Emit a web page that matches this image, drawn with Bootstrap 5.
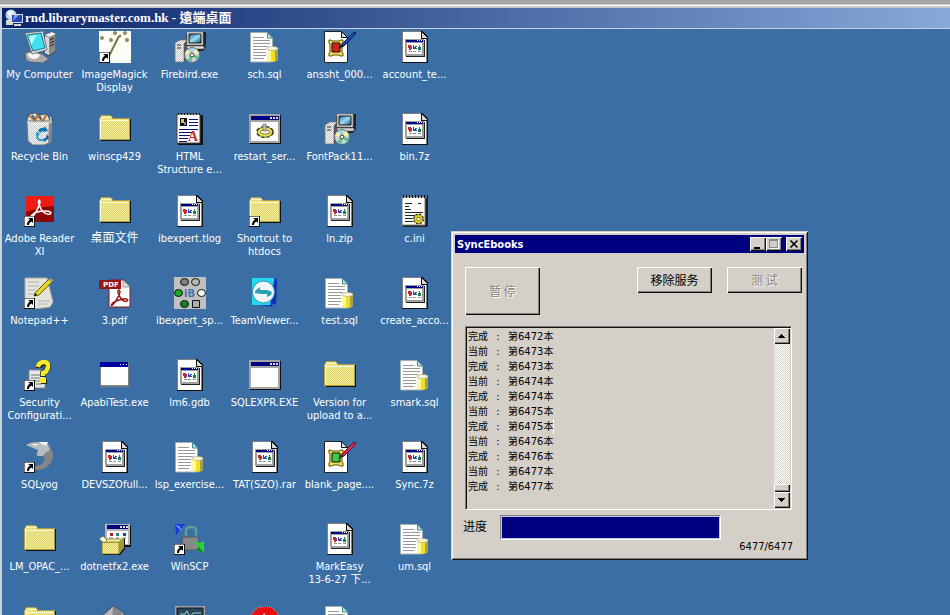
<!DOCTYPE html>
<html lang="zh-Hant">
<head>
<meta charset="utf-8">
<meta name="viewport" content="width=device-width, initial-scale=1">
<title>rnd.librarymaster.com.hk - 遠端桌面</title>
<link href="https://cdn.jsdelivr.net/npm/bootstrap@5.3.0/dist/css/bootstrap.min.css" rel="stylesheet">
<style>
  body { font: 11px/13px "DejaVu Sans Condensed", "Noto Sans", "Noto Sans CJK SC", sans-serif; background: #3a6ea5; }
  .remote-frame { border-left: 2px solid #c9d3dc; }
  .frame-top { height: 8px; margin-left: -2px; background: linear-gradient(#a5a3a3 0 4px, #c9c7c0 4px 5px, #fff 5px 6px, #ccc9c4 6px 8px); }
  .remote-title { height: 21px; border-bottom: 1px solid #c5d5e6; padding-left: 3px; gap: 2px; color: #fff;
    font: bold 13px/20px "Liberation Serif", "Noto Sans CJK TC", serif;
    background: linear-gradient(90deg, #0a246a, #87a9d8); }
  .remote-title svg { width: 18px; height: 18px; }
  .icon-grid { display: grid; grid-template-columns: repeat(6, 75px); grid-auto-rows: 82px; }
  .desk-item { padding-top: 2px; gap: 5px; white-space: nowrap; }
  .desk-item svg { width: 32px; height: 32px; flex: none; }
  .han { font-size: 12px; }
  .sync-window { left: 451px; top: 231px; width: 357px; padding: 4px; background: #d4d0c8; color: #000;
    box-shadow: inset 1px 1px #d4d0c8, inset -1px -1px #101010, inset 2px 2px #fff, inset -2px -2px #808080; }
  .sync-title { height: 18px; background: #000080; padding: 0 2px; font-weight: bold; }
  .raised { background: #d4d0c8; border: 0; border-radius: 0; padding: 0; color: #000;
    box-shadow: inset 1px 1px #fff, inset -1px -1px #101010, inset -2px -2px #808080; }
  .cap-btn { width: 16px; height: 14px; display: flex; }
  .cap-btn svg { width: 16px; height: 14px; }
  .sync-body { padding: 14px 2px 3px 10px; }
  .cmd-row { gap: 15px; }
  .cmd { width: 75px; height: 26px; font: 12px/14px "Noto Sans CJK SC", sans-serif; }
  .cmd.tall { height: 48px; }
  .cmd:disabled { color: #868480; text-shadow: 1px 1px #fff; }
  .log-box { margin: 11px 10px 5px 0; border: 1px solid; border-color: #808080 #fff #fff #808080; box-shadow: inset 1px 1px #101010; padding: 1px; }
  .log-lines { font: 10px/15px "DejaVu Sans", "Noto Sans CJK SC", sans-serif; padding: 1px 0 14px 1px; }
  .log-lines .colon { width: 20px; text-align: center; }
  .log-lines .caret { border-right: 1px solid #fff; }
  .scroller { width: 16px; background: repeating-conic-gradient(#fff 0 25%, #d4d0c8 0 50%) 0 0 / 2px 2px; }
  .scroller button { width: 16px; height: 16px; display: flex; }
  .scroller svg { width: 16px; height: 16px; }
  .thumb { height: 8px; }
  .meter-label { font: 12px/22px "Noto Sans CJK SC", sans-serif; width: 37px; margin-left: -2px; }
  .meter { width: 221px; height: 25px; border-radius: 0; border: 1px solid; border-color: #808080 #fff #fff #808080; background: #c4c8dc; padding: 1px; --bs-progress-bar-bg: #000080; }
  .counter { padding-right: 9px; }
</style>
<script src="https://cdn.jsdelivr.net/npm/bootstrap@5.3.0/dist/js/bootstrap.bundle.min.js"></script>
</head>
<body class="vh-100 overflow-hidden">
<svg class="position-absolute" width="0" height="0" aria-hidden="true">
  <defs>
    <pattern id="dith" width="2" height="2" patternUnits="userSpaceOnUse"><rect width="2" height="2" fill="#e0d464"/><path d="M0 0h1v1H0zM1 1h1v1H1z" fill="#f0eca0"/></pattern>
    <pattern id="dithGray" width="2" height="2" patternUnits="userSpaceOnUse"><rect width="2" height="2" fill="#c8c8c8"/><path d="M0 0h1v1H0zM1 1h1v1H1z" fill="#f4f4f4"/></pattern>
    <linearGradient id="screen" x1="0" y1="0" x2="1" y2="1"><stop offset="0" stop-color="#1e5fa8"/><stop offset=".5" stop-color="#9be0f0"/><stop offset="1" stop-color="#124e88"/></linearGradient>
    <symbol id="arrow" viewBox="0 0 32 32"><g shape-rendering="crispEdges"><path d="M0 21h11v11H0z" fill="#000"/><path d="M0 21h10v10H0z" fill="#fff" stroke="#222" stroke-width=".6"/></g><path d="M4 23h5v5l-1.500-1.500C5.500 27.500 5 28.500 5 30H3c0-3 1-4 3-5.500z"/></symbol>
    <symbol id="folder" viewBox="0 0 32 32"><g shape-rendering="crispEdges"><path d="M2 28h30V6h-2v20H2z" fill="#111"/><path d="M0 27V5h1V3h1V2h10v1h1v1h1v1h17v22z" fill="#a8a050"/><path d="M1 26V5h1V3h10v1h1v2h17v20z" fill="url(#dith)"/><path d="M1 25V6M2 4h10M2 7h27" fill="none" stroke="#fffbd0"/></g></symbol>
    <symbol id="file" viewBox="0 0 32 32"><g shape-rendering="crispEdges"><path d="M3 0h20l6 6v26H3z" fill="#111"/><path d="M3 0h19v7h6v24H3z" fill="#808080"/><path d="M4 1h18v7h5v23H4z" fill="#fff"/><path d="M22 1l6 6h-6z" fill="#d8d8d8"/><path d="M22 1v6h6" fill="none" stroke="#111"/><path d="M7 9h19v17H7z" fill="#222"/><path d="M6 8h19v17H6z" fill="#a0a0a0"/><path d="M7 9h17v2H7z" fill="#000080"/><path d="M18 9h1v1h-1zM20 9h1v1h-1zM22 9h1v1h-1z" fill="#fff"/><path d="M8 12h15v11H8z" fill="#fff"/><path d="M9 14h3v1h1v3h-1v1h-2v-2H9z" fill="#c52a2a"/><path d="M14 14h1v2h1v-1h2v1h-1v1h1v1h-4z" fill="#2848c0"/><path d="M20 14h1v2h1v3h-3v-3h1z" fill="#18804a"/><path d="M10 20h3v1h-3zM14 20h3v1h-3zM19 20h3v1h-3z" fill="#909090"/></g></symbol>
    <symbol id="sql" viewBox="0 0 32 32"><path d="M1.500 1.500h17l5 5.500v24h-22z" fill="#fff" stroke="#a4b0b0"/><path d="M18.500 1.500v5.500h5z" fill="#c8e8e8" stroke="#3c8f90"/><path d="M4 6.500h11M4 9.500h17M4 12.500h17M4 15.500h15M4 18.500h13M4 21.500h13M4 24.500h13M4 27.500h11" stroke="#989898"/><path d="M18 17v12q5.500 4 11 0V17" fill="#f0e020"/><path d="M18 17h4v13l-4-1z" fill="#fff8a0"/><path d="M26 17h3v12l-3 1z" fill="#a8a050"/><ellipse cx="23.500" cy="17.500" rx="5.500" ry="2" fill="#f8f6d8" stroke="#b0aa80" stroke-width=".7"/></symbol>
    <symbol id="picdoc" viewBox="0 0 32 32"><path d="M.5.5h17l6 6v25H.5z" fill="#fff" stroke="#222"/><path d="M17.500.5v6h6z" fill="#ddd" stroke="#111"/><path d="M5 9h2l1 1h7l2-1h2v3l-1 1v8l1 1v3h-3l-1-1H9l-1 1H5v-3l1-1v-8l-1-1z" fill="#f0df50" stroke="#5a5000"/><path d="M8 12h8v9H8z" fill="currentColor" stroke="#111"/></symbol>
    <symbol id="setup" viewBox="0 0 32 32"><path d="M10 20h19l3-4v-2H14z" fill="#222"/><path d="M13 15h17v3H13z" fill="#e0e0e0" stroke="#555" stroke-width=".7"/><path d="M14 1l-2 3v11h17l3-2V1z" fill="#222"/><path d="M13 1h16v13H13z" fill="#e4e4e4" stroke="#777" stroke-width=".7"/><path d="M15 3h12v9H15z" fill="url(#screen)" stroke="#111"/><path d="M1 12l5-3h7l-3 4v18H1z" fill="url(#dithGray)" stroke="#777" stroke-width=".8"/><path d="M10 13l3-4v18l-3 4z" fill="#555"/><path d="M3 14h4M3 17h4" stroke="#333"/><circle cx="18" cy="24" r="7.500" fill="#c9d8d4" stroke="#64706b"/><path d="M18 24l-7-1 2-4zM18 24l4-6 3 4z" fill="#f4f4a8"/><path d="M18 24l7 1-2 4zM18 24v7l-5-2z" fill="#54c890"/><path d="M18 24l-2-7h3z" fill="#8dd0ec"/><circle cx="18" cy="24" r="2" fill="#fff" stroke="#333"/></symbol>
    <symbol id="win" viewBox="0 0 32 32"><g shape-rendering="crispEdges"><path d="M1 2h31v29H1z" fill="#111"/><path d="M0 1h31v29H0z" fill="#a4a4a4"/><path d="M2 3h28v4H2z" fill="#000080"/><path d="M21 4h2v2h-2zM24 4h2v2h-2zM27 4h2v2h-2z" fill="#ddd"/><path d="M2 9h27v19H2z" fill="#fff"/></g></symbol>
    <symbol id="reader-a" viewBox="0 0 32 32"><path d="M16 5c-3 0-1 5 1 9s7 6 9 5 1-3-5-3-11 2-13 4 0 3 2 0 5-8 6-13q0-2-1-2" fill="none" stroke="currentColor" stroke-width="1.500"/></symbol>
  </defs>
</svg>

<div class="remote-frame d-flex flex-column h-100">
  <div class="frame-top flex-shrink-0"></div>
  <header class="remote-title d-flex align-items-center flex-shrink-0">
    <svg viewBox="0 0 18 18" aria-hidden="true"><circle cx="6" cy="6" r="5.500" fill="#b9cfe4"/><path d="M2 3l3-2 4 2-1 4-3 2z" fill="#eef6fb"/><path d="M1 11h7v5H1z" fill="#d8d8d0"/><path d="M6 5h12v9H6z" fill="#d8dce8"/><path d="M7 6h10v7H7z" fill="#2646b8"/><path d="M9 6h5l-6 6z" fill="#7897e8"/><path d="M9 15h7v2H9z" fill="#d8d8d0"/></svg>
    <span>rnd.librarymaster.com.hk - 遠端桌面</span>
  </header>

  <main class="flex-grow-1 overflow-hidden">
    <nav class="icon-grid" aria-label="Desktop">
      <a href="#" class="desk-item d-flex flex-column align-items-center text-center text-white text-decoration-none"><svg viewBox="0 0 32 32"><path d="M21 5l7-4 4 2v17l-7 5-4-3z" fill="#888" stroke="#222" stroke-width=".6"/><path d="M21 4l7-3 4 2-7 3z" fill="#eee"/><path d="M21 5l4 2v17l-4-2z" fill="#d8d8d8"/><path d="M26 9l4-2M26 12l4-2M26 15l4-2" stroke="#222"/><path d="M1 23c3-4 12-2 17 0l7 5-6 4-13-1q-5-1-5-8" fill="#aaa" stroke="#444" stroke-width=".6"/><path d="M3 23q7-3 13 1l-2 3q-8 3-11-4" fill="#f4f4f4"/><path d="M1 2l18-2 4 19-15 4z" fill="#ddd" stroke="#555" stroke-width=".7"/><path d="M3 4l14-2 4 15-12 3z" fill="#42dff0" stroke="#187888"/><path d="M5 5l8-1-6 10z" fill="#b4ffff"/></svg><span>My Computer</span></a>
      <a href="#" class="desk-item d-flex flex-column align-items-center text-center text-white text-decoration-none"><svg viewBox="0 0 32 32"><path d="M0 0h32v32H0z" fill="#fdfdf8"/><path d="M20 5L10 25" stroke="#7a7642" stroke-width="2"/><g fill="#a8a468" stroke="#5f5c2c" stroke-width=".7"><circle cx="3" cy="7" r="1.500"/><circle cx="12" cy="9" r="1.500"/><circle cx="16" cy="2" r="1.500"/><circle cx="26" cy="2" r="1.500"/><circle cx="28" cy="9" r="1.500"/><circle cx="21" cy="5" r="1"/></g><use href="#arrow"/></svg><span>ImageMagick<br>Display</span></a>
      <a href="#" class="desk-item d-flex flex-column align-items-center text-center text-white text-decoration-none"><svg><use href="#setup"/></svg><span>Firebird.exe</span></a>
      <a href="#" class="desk-item d-flex flex-column align-items-center text-center text-white text-decoration-none"><svg><use href="#sql"/></svg><span>sch.sql</span></a>
      <a href="#" class="desk-item d-flex flex-column align-items-center text-center text-white text-decoration-none"><svg viewBox="0 0 32 32"><use href="#picdoc" color="#d42018"/><path d="M15 17l3-4 11-11 3-1-1 3-11 11z" fill="#2048b8" stroke="#0a1c60"/><path d="M14 18l4-5 2 2z" fill="#222"/></svg><span>anssht_000...</span></a>
      <a href="#" class="desk-item d-flex flex-column align-items-center text-center text-white text-decoration-none"><svg><use href="#file"/></svg><span>account_te...</span></a>

      <a href="#" class="desk-item d-flex flex-column align-items-center text-center text-white text-decoration-none"><svg viewBox="0 0 32 32"><path d="M3 6l3-5 5-1 4 2 6-1 7 3v6H4z" fill="#e4dcc4" stroke="#333" stroke-width=".7"/><path d="M6 3l5 5 2-5 6 5 3-6" fill="none" stroke="#b87430" stroke-width="2"/><path d="M8 2l3 4M15 1l2 5M24 2l2 5" stroke="#2c5c9a" stroke-width="1.500"/><path d="M3 8h25l-1 21-7 3H9l-5-4z" fill="url(#dithGray)" stroke="#777"/><path d="M25 9h3l-1 20-3 1z" fill="#888"/><path d="M3 8l4 3h17l4-3" fill="none" stroke="#eee"/><path d="M14 18q2-4 6-3l1-2 3 5-5 1v-1q-2 0-2 2z" fill="#1474b4"/><path d="M12 19l4 1-2 4q2 3 5 2v2q-6 1-7-4z" fill="#30a4c8"/><path d="M23 21l2 4-5 4-1-3 3-1z" fill="#0e5898"/></svg><span>Recycle Bin</span></a>
      <a href="#" class="desk-item d-flex flex-column align-items-center text-center text-white text-decoration-none"><svg><use href="#folder"/></svg><span>winscp429</span></a>
      <a href="#" class="desk-item d-flex flex-column align-items-center text-center text-white text-decoration-none"><svg viewBox="0 0 32 32"><path d="M4 2h25v30H4z" fill="#111"/><path d="M3 1h23v29H3z" fill="#fff" stroke="#444"/><path d="M4 1h24" stroke="#111" stroke-width="2" stroke-dasharray="1 2"/><path d="M6 5h7v8H6z" fill="#111"/><path d="M7 6h3v4H7z" fill="#e8c048"/><path d="M10 9h2v3h-2z" fill="#6890c8"/><path d="M15 6.500h9M15 9.500h9M15 12.500h9M5 16.500h19M5 19.500h13M5 22.500h11M5 25.500h9M5 28.500h8" stroke="#101070"/><text x="14" y="28" fill="#c83020" font-family="Liberation Serif" font-weight="bold" font-size="14">A</text></svg><span>HTML<br>Structure e...</span></a>
      <a href="#" class="desk-item d-flex flex-column align-items-center text-center text-white text-decoration-none"><svg viewBox="0 0 32 32"><use href="#win"/><ellipse cx="16" cy="19" rx="7" ry="4" fill="none" stroke="#3a3600" stroke-width="4" stroke-dasharray="3 1.500"/><ellipse cx="16" cy="19" rx="6" ry="3.500" fill="#fff" stroke="#4a4400" stroke-width="3.500"/><ellipse cx="16" cy="19" rx="6" ry="3.500" fill="none" stroke="#e8dc60" stroke-width="2.500"/><path d="M14 11h3v7h-3z" fill="#c0c0c0" stroke="#666" stroke-width=".7"/></svg><span>restart_ser...</span></a>
      <a href="#" class="desk-item d-flex flex-column align-items-center text-center text-white text-decoration-none"><svg><use href="#setup"/></svg><span>FontPack11...</span></a>
      <a href="#" class="desk-item d-flex flex-column align-items-center text-center text-white text-decoration-none"><svg><use href="#file"/></svg><span>bin.7z</span></a>

      <a href="#" class="desk-item d-flex flex-column align-items-center text-center text-white text-decoration-none"><svg viewBox="0 0 32 32"><path d="M2 1h28v26H2z" fill="#8c0808"/><path d="M2 1h28v10q-12 0-28 6z" fill="#f01c14"/><use href="#reader-a" color="#fff"/><use href="#arrow"/></svg><span>Adobe Reader<br>XI</span></a>
      <a href="#" class="desk-item d-flex flex-column align-items-center text-center text-white text-decoration-none"><svg><use href="#folder"/></svg><span class="han">桌面文件</span></a>
      <a href="#" class="desk-item d-flex flex-column align-items-center text-center text-white text-decoration-none"><svg><use href="#file"/></svg><span>ibexpert.tlog</span></a>
      <a href="#" class="desk-item d-flex flex-column align-items-center text-center text-white text-decoration-none"><svg viewBox="0 0 32 32"><use href="#folder"/><use href="#arrow"/></svg><span>Shortcut to<br>htdocs</span></a>
      <a href="#" class="desk-item d-flex flex-column align-items-center text-center text-white text-decoration-none"><svg><use href="#file"/></svg><span>ln.zip</span></a>
      <a href="#" class="desk-item d-flex flex-column align-items-center text-center text-white text-decoration-none"><svg viewBox="0 0 32 32"><path d="M4 3h25v28l-2 1H4z" fill="#222"/><path d="M3 2h23v28H3z" fill="#fff" stroke="#777"/><path d="M4 1.500h25" stroke="#111" stroke-width="3" stroke-dasharray="1 2"/><path d="M6 8.500h7M19 8.500h3M6 11.500h4M6 14.500h6M6 17.500h18M6 20.500h10M6 23.500h8M6 26.500h8" stroke="#222"/><circle cx="19.500" cy="24" r="4" fill="none" stroke="#444400" stroke-width="3" stroke-dasharray="2 1.140"/><circle cx="19.500" cy="24" r="3" fill="#fff" stroke="#444400" stroke-width="3"/><circle cx="19.500" cy="24" r="3" fill="none" stroke="#e0d020" stroke-width="2"/></svg><span>c.ini</span></a>

      <a href="#" class="desk-item d-flex flex-column align-items-center text-center text-white text-decoration-none"><svg viewBox="0 0 32 32"><path d="M1 1h22l6 24-3 5-16 2L1 29z" fill="#e4e4dc" stroke="#aaa"/><path d="M4 5h11M4 9h11M4 13h8M4 17h7M14 24h12M14 27h10" stroke="#b0b0b0"/><path d="M10 19l2-4L26 1l4 2-15 15z" fill="#e8d820" stroke="#625a10"/><path d="M24 3l2-2 4 2-2 2z" fill="#999"/><path d="M10 19l1-3 2 2z"/><use href="#arrow"/></svg><span>Notepad++</span></a>
      <a href="#" class="desk-item d-flex flex-column align-items-center text-center text-white text-decoration-none"><svg viewBox="0 0 32 32"><path d="M10 3h14l7 7v20H10z" fill="#fff" stroke="#8c1616"/><path d="M24 3v7h7z" fill="#ddd" stroke="#999"/><path d="M0 3h22v9H0z" fill="#981414"/><text x="4" y="10" fill="#fff" font-family="DejaVu Sans" font-weight="bold" font-size="7">PDF</text><path d="M20 13c-2 0-1 4 1 7s5 5 7 4 0-3-4-2-9 2-11 5 1 1 3-2 4-6 5-10q0-2-1-2" fill="none" stroke="#981414" stroke-width="1.400"/></svg><span>3.pdf</span></a>
      <a href="#" class="desk-item d-flex flex-column align-items-center text-center text-white text-decoration-none"><svg viewBox="0 0 32 32"><path d="M0 0h32v32H0z" fill="#c0c0c0"/><g stroke="#111"><ellipse cx="10.500" cy="5" rx="4" ry="3.500" fill="#808080"/><ellipse cx="21.500" cy="5" rx="4" ry="3.500" fill="#b0bcb0"/><ellipse cx="4.500" cy="16" rx="4" ry="3.500" fill="#20a830"/><ellipse cx="27.500" cy="16" rx="4" ry="3.500" fill="#f4fff4"/><ellipse cx="10.500" cy="27" rx="4" ry="3.500" fill="#108020"/><path d="M18.500 23.500h7v7h-7z" fill="#a8b0a8"/></g><text x="10" y="20" fill="#4870b0" font-family="DejaVu Sans" font-weight="bold" font-size="10">iB</text></svg><span>ibexpert_sp...</span></a>
      <a href="#" class="desk-item d-flex flex-column align-items-center text-center text-white text-decoration-none"><svg viewBox="0 0 32 32"><path d="M3 1l22 1 3-1-1 26-5 3-19-3z" fill="#1040c0"/><path d="M3 1h22v27H3z" fill="#20d8f0"/><path d="M25 3l3-1-1 24-6 3z" fill="#1030b8"/><circle cx="14.500" cy="15" r="11" fill="#eef6f8" stroke="#3890a8"/><path d="M6 14l5-4v3h7l5 2-1 3-4 2v-3h-6l-6-1z" fill="#28a0b0"/></svg><span>TeamViewer...</span></a>
      <a href="#" class="desk-item d-flex flex-column align-items-center text-center text-white text-decoration-none"><svg><use href="#sql"/></svg><span>test.sql</span></a>
      <a href="#" class="desk-item d-flex flex-column align-items-center text-center text-white text-decoration-none"><svg><use href="#file"/></svg><span>create_acco...</span></a>

      <a href="#" class="desk-item d-flex flex-column align-items-center text-center text-white text-decoration-none"><svg viewBox="0 0 32 32"><path d="M5 11h12l4 4v14H5z" fill="#e8e8e8" stroke="#888"/><path d="M7 16h9M7 19h9M7 22h9M12 25h6" stroke="#777"/><path d="M15 9q0-5 5-5t4 4-5 6v4" fill="none" stroke="#222" stroke-width="6"/><path d="M14 8q1-5 6-5t4 5-5 6v3" fill="none" stroke="#f4ec28" stroke-width="4.500"/><path d="M17 20h6v5h-6z" fill="#222"/><path d="M16 19h6v5h-6z" fill="#f4ec28"/><use href="#arrow"/></svg><span>Security<br>Configurati...</span></a>
      <a href="#" class="desk-item d-flex flex-column align-items-center text-center text-white text-decoration-none"><svg viewBox="0 0 32 32" shape-rendering="crispEdges"><path d="M1 3h29v25H1z" fill="#808080"/><path d="M1 3h28v5H1z" fill="#0000a0"/><path d="M21 5h1v1h-1zM24 5h1v1h-1zM27 5h1v1h-1z" fill="#fff"/><path d="M2 8h27v18H2z" fill="#fff"/></svg><span>ApabiTest.exe</span></a>
      <a href="#" class="desk-item d-flex flex-column align-items-center text-center text-white text-decoration-none"><svg><use href="#file"/></svg><span>lm6.gdb</span></a>
      <a href="#" class="desk-item d-flex flex-column align-items-center text-center text-white text-decoration-none"><svg><use href="#win"/></svg><span>SQLEXPR.EXE</span></a>
      <a href="#" class="desk-item d-flex flex-column align-items-center text-center text-white text-decoration-none"><svg><use href="#folder"/></svg><span>Version for<br>upload to a...</span></a>
      <a href="#" class="desk-item d-flex flex-column align-items-center text-center text-white text-decoration-none"><svg><use href="#sql"/></svg><span>smark.sql</span></a>

      <a href="#" class="desk-item d-flex flex-column align-items-center text-center text-white text-decoration-none"><svg viewBox="0 0 32 32"><path d="M2 4q8-4 14-3h7l1 3q6 6 5 12-2 10-13 13-5-1-7 0l3-4q8-1 9-8l-3-2-6-2 2-4z" fill="#868686"/><path d="M2 4q8-4 13-2l9 2 2 5-5 3-2 3-6 0 1-6z" fill="#b8bcc0"/><path d="M14 1h10l-1 3 5 1-9-1zM8 3l7 0-4 2z" fill="#eef2f6"/><use href="#arrow"/></svg><span>SQLyog</span></a>
      <a href="#" class="desk-item d-flex flex-column align-items-center text-center text-white text-decoration-none"><svg><use href="#file"/></svg><span>DEVSZOfull...</span></a>
      <a href="#" class="desk-item d-flex flex-column align-items-center text-center text-white text-decoration-none"><svg><use href="#sql"/></svg><span>lsp_exercise...</span></a>
      <a href="#" class="desk-item d-flex flex-column align-items-center text-center text-white text-decoration-none"><svg><use href="#file"/></svg><span>TAT(SZO).rar</span></a>
      <a href="#" class="desk-item d-flex flex-column align-items-center text-center text-white text-decoration-none"><svg viewBox="0 0 32 32"><use href="#picdoc" color="#40c848"/><path d="M15 17l3-4 11-11 3-1-1 3-11 11z" fill="#d02858" stroke="#701030"/><path d="M14 18l4-5 2 2z" fill="#333"/></svg><span>blank_page....</span></a>
      <a href="#" class="desk-item d-flex flex-column align-items-center text-center text-white text-decoration-none"><svg><use href="#file"/></svg><span>Sync.7z</span></a>

      <a href="#" class="desk-item d-flex flex-column align-items-center text-center text-white text-decoration-none"><svg><use href="#folder"/></svg><span>LM_OPAC_...</span></a>
      <a href="#" class="desk-item d-flex flex-column align-items-center text-center text-white text-decoration-none"><svg viewBox="0 0 32 32"><path d="M7 2h25v22H7z" fill="#111"/><path d="M6 1h25v21H6z" fill="#b8b8b8"/><path d="M8 2h21v4H8z" fill="#000080"/><path d="M21 3h2v2h-2zM24 3h2v2h-2zM27 3h2v2h-2z" fill="#ddd"/><path d="M8 8h21v13H8z" fill="#fff"/><path d="M11 10h3v3h-3z" fill="#b02020"/><path d="M17 10h3v3h-3z" fill="#208090"/><path d="M24 10h3v3h-3z" fill="#2040a0"/><path d="M10 15h4M17 15h3M24 15h3" stroke="#777"/><path d="M4 20h17l5-5v11l-5 6H4z" fill="#111"/><path d="M3 19h17v12H3z" fill="url(#dith)" stroke="#706818" stroke-width=".7"/><path d="M3 19l4-3h18l-5 3z" fill="#f4eca0" stroke="#706818" stroke-width=".7"/><path d="M20 19l5-5v11l-5 6z" fill="#a49838"/><path d="M0 16l4-3 4 4-3 3z" fill="#fffce0" stroke="#706818" stroke-width=".7"/></svg><span>dotnetfx2.exe</span></a>
      <a href="#" class="desk-item d-flex flex-column align-items-center text-center text-white text-decoration-none"><svg viewBox="0 0 32 32"><path d="M12 15V8q0-4 5-4t5 4v7" fill="none" stroke="#58a098" stroke-width="2.500"/><path d="M8 14h15l2 3v10H9z" fill="#888" stroke="#556"/><path d="M1 1h10L6 7l-4 5z" fill="#1838e8"/><path d="M1 2l8 7-4-6z" fill="#88a0f0"/><path d="M30 30V18l-4 2-8-1 7 4-3 4z" fill="#20d838"/><path d="M22 27l8 3-5-6z" fill="#108028"/><use href="#arrow"/></svg><span>WinSCP</span></a>
      <span></span>
      <a href="#" class="desk-item d-flex flex-column align-items-center text-center text-white text-decoration-none"><svg><use href="#file"/></svg><span>MarkEasy<br>13-6-27 下...</span></a>
      <a href="#" class="desk-item d-flex flex-column align-items-center text-center text-white text-decoration-none"><svg><use href="#sql"/></svg><span>um.sql</span></a>

      <a href="#" class="desk-item d-flex flex-column align-items-center" aria-label="Folder"><svg><use href="#folder"/></svg></a>
      <a href="#" class="desk-item d-flex flex-column align-items-center" aria-label="Package"><svg viewBox="0 0 32 32"><path d="M2 12L14 1l11 7v20H2z" fill="#b8b8b8" stroke="#444"/><path d="M14 1l11 7-12 8z" fill="#888"/></svg></a>
      <a href="#" class="desk-item d-flex flex-column align-items-center" aria-label="Monitor"><svg viewBox="0 0 32 32"><path d="M1 1h30v26H1z" fill="#a0a0a8"/><path d="M3 3h26v20H3z" fill="#284858" stroke="#111"/><path d="M6 9h5l2-3 3 6 3-4h8" fill="none" stroke="#a0d0d8"/></svg></a>
      <a href="#" class="desk-item d-flex flex-column align-items-center" aria-label="Stop"><svg viewBox="0 0 32 32"><path d="M10 2h12l7 6v12l-7 8H10l-7-8V8z" fill="#e81010" stroke="#f8b0b0" stroke-width=".7" stroke-dasharray="1 1"/><path d="M15 8l4 6h-7z" fill="#fff"/></svg></a>
      <a href="#" class="desk-item d-flex flex-column align-items-center" aria-label="SQL file"><svg><use href="#sql"/></svg></a>
    </nav>
  </main>
</div>

<section class="sync-window position-absolute" aria-label="SyncEbooks">
  <div class="sync-title d-flex align-items-center text-white">
    <span class="me-auto">SyncEbooks</span>
    <button class="raised cap-btn" type="button" aria-label="Minimize"><svg viewBox="0 0 16 14"><path d="M4 10h6v2H4z"/></svg></button>
    <button class="raised cap-btn" type="button" aria-label="Maximize" disabled><svg viewBox="0 0 16 14" shape-rendering="crispEdges"><path d="M4 3h9v9H4z" fill="#fff"/><path d="M3 2h9v9H3z" fill="#888"/><path d="M4 4h7v6H4z" fill="#d4d0c8"/></svg></button>
    <button class="raised cap-btn ms-1" type="button" aria-label="Close"><svg viewBox="0 0 16 14"><path d="M4.500 3.500l7 7M11.500 3.500l-7 7" stroke="#000" stroke-width="1.600"/></svg></button>
  </div>
  <div class="sync-body">
    <div class="cmd-row d-flex align-items-start">
      <button class="raised cmd tall me-auto" type="button" disabled>暂 停</button>
      <button class="raised cmd" type="button">移除服务</button>
      <button class="raised cmd" type="button" disabled>测 试</button>
    </div>
    <div class="log-box d-flex">
      <div class="log-lines flex-grow-1">
        <div class="d-flex"><span>完成</span><span class="colon">:</span><span>第6472本</span></div>
        <div class="d-flex"><span>当前</span><span class="colon">:</span><span>第6473本</span></div>
        <div class="d-flex"><span>完成</span><span class="colon">:</span><span>第6473本</span></div>
        <div class="d-flex"><span>当前</span><span class="colon">:</span><span>第6474本</span></div>
        <div class="d-flex"><span>完成</span><span class="colon">:</span><span>第6474本</span></div>
        <div class="d-flex"><span>当前</span><span class="colon">:</span><span>第6475本</span></div>
        <div class="d-flex"><span>完成</span><span class="colon">:</span><span class="caret">第6475本</span></div>
        <div class="d-flex"><span>当前</span><span class="colon">:</span><span>第6476本</span></div>
        <div class="d-flex"><span>完成</span><span class="colon">:</span><span>第6476本</span></div>
        <div class="d-flex"><span>当前</span><span class="colon">:</span><span>第6477本</span></div>
        <div class="d-flex"><span>完成</span><span class="colon">:</span><span>第6477本</span></div>
      </div>
      <div class="scroller d-flex flex-column">
        <button class="raised" type="button" aria-label="Scroll up"><svg viewBox="0 0 16 16" shape-rendering="crispEdges"><path d="M7 6h1v1h1v1h1v1h1v1H4V9h1V8h1V7h1z"/></svg></button>
        <div class="raised thumb mt-auto"></div>
        <button class="raised" type="button" aria-label="Scroll down"><svg viewBox="0 0 16 16" shape-rendering="crispEdges"><path d="M4 6h7v1h-1v1H9v1H8v1H7V9H6V8H5V7H4z"/></svg></button>
      </div>
    </div>
    <div class="d-flex align-items-start">
      <span class="meter-label" id="meterLabel">进度</span>
      <div class="progress meter" role="progressbar" aria-labelledby="meterLabel" aria-valuenow="6477" aria-valuemin="0" aria-valuemax="6477"><div class="progress-bar w-100"></div></div>
    </div>
    <div class="counter text-end">6477/6477</div>
  </div>
</section>
</body>
</html>
